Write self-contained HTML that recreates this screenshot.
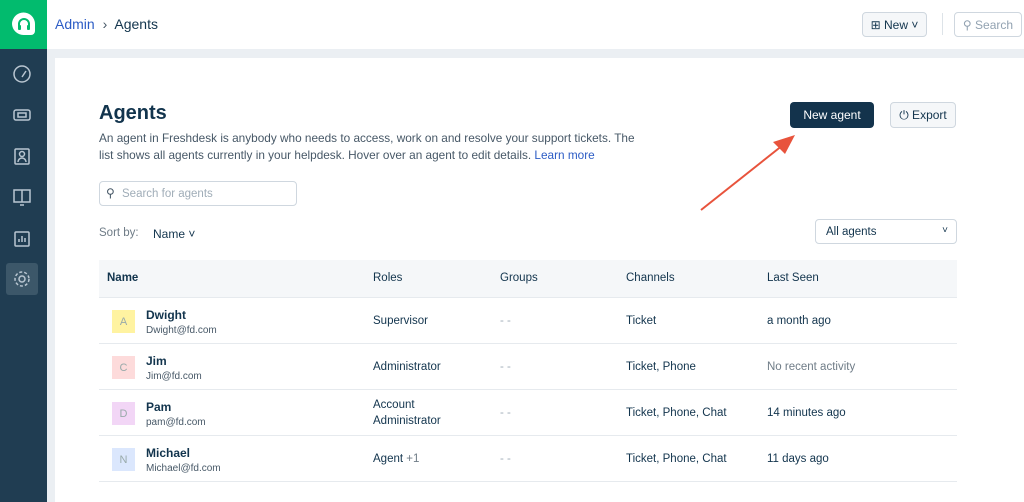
<!DOCTYPE html>
<html><head><style>
*{margin:0;padding:0;box-sizing:border-box}
body{width:1024px;height:502px;overflow:hidden;font-family:"Liberation Sans",sans-serif;background:#ebeff3;position:relative;color:#12344d}
.a{position:absolute}
.side{left:0;top:0;width:47px;height:502px;background:#203d52}
.logo{left:0;top:0;width:47px;height:49px;background:#02bb6e}
.hdr{left:47px;top:0;width:977px;height:49px;background:#fff}
.card{left:55px;top:58px;width:969px;height:444px;background:#fff}
.btn{border:1px solid #cfd7df;border-radius:4px;background:#f5f7f9;font-size:13px;display:flex;align-items:center;justify-content:center}
.ic{stroke:#b9c6d1;fill:none;stroke-width:1.5}
.row{left:99px;width:858px;height:46px;border-bottom:1px solid #e6eaee;font-size:12px}
.av{position:absolute;left:13px;top:12px;width:23px;height:23px;font-size:11px;display:flex;align-items:center;justify-content:center;color:#9aa}
.nm{position:absolute;left:47px;top:10px;font-size:12px;font-weight:bold;color:#12344d}
.em{position:absolute;left:47px;top:27px;font-size:10px;color:#475867}
.c{position:absolute;top:17px;font-size:11.5px;color:#12344d}
</style></head><body>
<div class="a side"></div>
<div class="a logo"><svg width="47" height="49"><path d="M12 24a11.5 11.5 0 0 1 23 0v7a4 4 0 0 1-4 4h-7.5a11.5 11.5 0 0 1-11.5-11z" fill="#fff"/><path d="M19 28v-4a5 5 0 0 1 10 0v4" stroke="#02bb6e" stroke-width="2" fill="none"/><rect x="18" y="25" width="3" height="5" rx="1" fill="#02bb6e"/><rect x="27" y="25" width="3" height="5" rx="1" fill="#02bb6e"/></svg></div>
<svg class="a" style="left:0;top:49px" width="47" height="260">
<circle class="ic" cx="22" cy="25" r="8"/><path class="ic" d="M22 28l4-6"/>
<rect class="ic" x="14" y="61" width="16" height="10" rx="2"/><path class="ic" d="M18 64h8v4h-8z"/>
<rect class="ic" x="15" y="100" width="14" height="15" rx="1"/><circle class="ic" cx="22" cy="105" r="2.5"/><path class="ic" d="M18 113a4 4 0 0 1 8 0"/>
<path class="ic" d="M14 141h16v12h-16zM22 141v12M20 156h4"/>
<rect class="ic" x="15" y="183" width="14" height="14" rx="1"/><path class="ic" d="M19 193v-3M22 193v-6M25 193v-4"/>
</svg>
<div class="a" style="left:6px;top:263px;width:32px;height:32px;background:#3c5769;border-radius:3px"></div>
<svg class="a" style="left:6px;top:263px" width="32" height="32"><circle class="ic" cx="16" cy="16" r="3"/><circle class="ic" cx="16" cy="16" r="7" stroke-dasharray="3 2"/></svg>
<div class="a hdr"></div>
<div class="a" style="left:55px;top:16px;font-size:14px"><span style="color:#2c5cc5">Admin</span> <span style="color:#475867;margin:0 4px">›</span> Agents</div>
<div class="a btn" style="left:862px;top:12px;width:65px;height:25px;font-size:12px">⊞&nbsp;New ˅</div>
<div class="a" style="left:942px;top:13px;width:1px;height:22px;background:#dde3e8"></div>
<div class="a btn" style="left:954px;top:12px;width:68px;height:25px;background:#fff;color:#92a2b1;font-size:12px">⚲ Search</div>
<div class="a card"></div>
<div class="a" style="left:99px;top:102px;font-size:20px;font-weight:bold">Agents</div>
<div class="a" style="left:99px;top:130px;width:538px;font-size:11.8px;line-height:17px;color:#475867">An agent in Freshdesk is anybody who needs to access, work on and resolve your support tickets. The list shows all agents currently in your helpdesk. Hover over an agent to edit details. <span style="color:#2c5cc5">Learn more</span></div>
<div class="a" style="left:790px;top:102px;width:84px;height:26px;background:#13334c;border-radius:4px;color:#fff;font-size:12px;display:flex;align-items:center;justify-content:center">New agent</div>
<div class="a btn" style="left:890px;top:102px;width:66px;height:26px;font-size:12px">⏻&nbsp;Export</div>
<svg class="a" style="left:695px;top:130px" width="110" height="85"><path d="M6 80L88 15" stroke="#e8533c" stroke-width="2"/><path d="M100 5L78 12 90 24z" fill="#e8533c"/></svg>
<div class="a" style="left:99px;top:181px;width:198px;height:25px;border:1px solid #cfd7df;border-radius:4px;font-size:11.5px;color:#a0adb8;padding:6px 0 0 22px">Search for agents</div>
<div class="a" style="left:106px;top:186px;font-size:12px;color:#475867">⚲</div>
<div class="a" style="left:99px;top:227px;font-size:11.5px;color:#6f7c87">Sort by:</div>
<div class="a" style="left:153px;top:227px;font-size:12px;color:#12344d">Name ˅</div>
<div class="a" style="left:815px;top:219px;width:142px;height:25px;border:1px solid #cfd7df;border-radius:4px;font-size:11.5px;padding:6px 0 0 10px">All agents<span style="position:absolute;right:8px;top:5px;font-size:10px">˅</span></div>
<div class="a" style="left:99px;top:260px;width:858px;height:38px;background:#f5f7f9;border-bottom:1px solid #e6eaee;font-size:11px;font-weight:bold">
<span class="c" style="top:12px;left:8px">Name</span><span class="c" style="top:12px;left:274px;font-weight:normal">Roles</span><span class="c" style="top:12px;left:401px;font-weight:normal">Groups</span><span class="c" style="top:12px;left:527px;font-weight:normal">Channels</span><span class="c" style="top:12px;left:668px;font-weight:normal">Last Seen</span></div>
<div class="a row" style="top:298px"><div class="av" style="background:#fff3a1">A</div><div class="nm">Dwight</div><div class="em">Dwight@fd.com</div><span class="c" style="left:274px">Supervisor</span><span class="c" style="left:401px;color:#a0adb8">- -</span><span class="c" style="left:527px">Ticket</span><span class="c" style="left:668px">a month ago</span></div>
<div class="a row" style="top:344px"><div class="av" style="background:#fddbdb">C</div><div class="nm">Jim</div><div class="em">Jim@fd.com</div><span class="c" style="left:274px">Administrator</span><span class="c" style="left:401px;color:#a0adb8">- -</span><span class="c" style="left:527px">Ticket, Phone</span><span class="c" style="left:668px;color:#6f7c87">No recent activity</span></div>
<div class="a row" style="top:390px"><div class="av" style="background:#f2d6f6">D</div><div class="nm">Pam</div><div class="em">pam@fd.com</div><span class="c" style="left:274px;top:7px;line-height:16px">Account<br>Administrator</span><span class="c" style="left:401px;color:#a0adb8">- -</span><span class="c" style="left:527px">Ticket, Phone, Chat</span><span class="c" style="left:668px">14 minutes ago</span></div>
<div class="a row" style="top:436px"><div class="av" style="background:#dbe7fd">N</div><div class="nm">Michael</div><div class="em">Michael@fd.com</div><span class="c" style="left:274px">Agent <span style="color:#6f7c87">+1</span></span><span class="c" style="left:401px;color:#a0adb8">- -</span><span class="c" style="left:527px">Ticket, Phone, Chat</span><span class="c" style="left:668px">11 days ago</span></div>
</body></html>
